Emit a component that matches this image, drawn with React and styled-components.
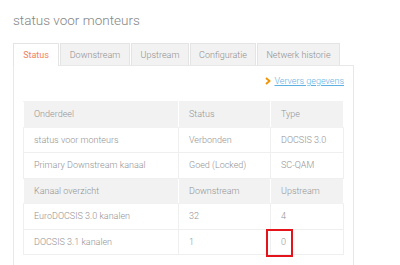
import styled, { createGlobalStyle } from "styled-components";

const Global = createGlobalStyle`
  body {
    margin: 0;
    background: #fff;
    font-family: Roboto, "Open Sans", sans-serif;
    font-weight: 300;
    color: #999;
  }
`;

const Page = styled.div`
  padding: 9px 0 0 13px;
  width: 341px;
`;

const Title = styled.h1`
  margin: 0 0 12px;
  font-size: 13.5px;
  font-weight: 300;
  color: #858585;
  line-height: 22px;
`;

const Tabs = styled.div`
  display: flex;
  gap: 1px;
  height: 22px;
`;

const Tab = styled.div`
  width: ${p => p.$w}px;
  box-sizing: border-box;
  display: flex;
  align-items: center;
  justify-content: center;
  font-size: 9px;
  border: 1px solid #e4e4e4;
  border-bottom: none;
  background: ${p => (p.$active ? "#fff" : "#f2f2f2")};
  color: ${p => (p.$active ? "#f2805f" : "#8f8f8f")};
  font-weight: ${p => (p.$active ? 400 : 300)};
  margin-bottom: ${p => (p.$active ? "-1px" : "0")};
  position: relative;
  z-index: ${p => (p.$active ? 1 : 0)};
`;

const Panel = styled.div`
  border: 1px solid #e8e8e8;
  border-bottom: none;
  padding: 9px 9px 10px;
  box-sizing: border-box;
`;

const Refresh = styled.div`
  display: flex;
  justify-content: flex-end;
  align-items: center;
  gap: 3px;
  height: 12px;
  margin-bottom: 14px;
`;

const RefreshLink = styled.a`
  font-size: 9px;
  color: #5eb0e2;
  text-decoration: underline;
`;

const Table = styled.table`
  width: 100%;
  border-collapse: collapse;
  border: 1px solid #efefef;
  font-size: 9px;
`;

const Row = styled.tr`
  height: 25.5px;
  background: ${p => (p.$head ? "#f2f2f2" : "#fff")};
`;

const Cell = styled.td`
  padding: 0 10px;
  border: 1px solid #efefef;
  border-color: ${p => (p.$head ? "#f2f2f2 #fff" : "#efefef")};
  color: #939393;
  width: ${p => p.$w || "auto"};
  position: relative;
`;

const Highlight = styled.span`
  position: absolute;
  left: -5px;
  top: -1px;
  width: 27px;
  height: 28px;
  box-sizing: border-box;
  border: 2px solid #e5141b;
`;

const Chevron = () => (
  <svg width="6" height="8" viewBox="0 0 6 8">
    <path d="M1 1 L4.5 4 L1 7" fill="none" stroke="#f39200" strokeWidth="1.8" />
  </svg>
);

const rows = [
  { head: true, cells: ["Onderdeel", "Status", "Type"] },
  { cells: ["status voor monteurs", "Verbonden", "DOCSIS 3.0"] },
  { cells: ["Primary Downstream kanaal", "Goed (Locked)", "SC-QAM"] },
  { head: true, cells: ["Kanaal overzicht", "Downstream", "Upstream"] },
  { cells: ["EuroDOCSIS 3.0 kanalen", "32", "4"] },
  { cells: ["DOCSIS 3.1 kanalen", "1", "0"], mark: true },
];

const tabs = [
  ["Status", 46],
  ["Downstream", 70],
  ["Upstream", 58],
  ["Configuratie", 66],
  ["Netwerk historie", 83],
];

export default function App() {
  return (
    <>
      <Global />
      <Page>
        <Title>status voor monteurs</Title>
        <Tabs>
          {tabs.map(([t, w], i) => (
            <Tab key={t} $w={w} $active={i === 0}>{t}</Tab>
          ))}
        </Tabs>
        <Panel>
          <Refresh>
            <Chevron />
            <RefreshLink>Ververs gegevens</RefreshLink>
          </Refresh>
          <Table>
            <tbody>
              {rows.map((r, i) => (
                <Row key={i} $head={r.head}>
                  <Cell $head={r.head} $w="134px">{r.cells[0]}</Cell>
                  <Cell $head={r.head} $w="71px">{r.cells[1]}</Cell>
                  <Cell $head={r.head}>
                    {r.mark && <Highlight />}
                    {r.cells[2]}
                  </Cell>
                </Row>
              ))}
            </tbody>
          </Table>
        </Panel>
      </Page>
    </>
  );
}
